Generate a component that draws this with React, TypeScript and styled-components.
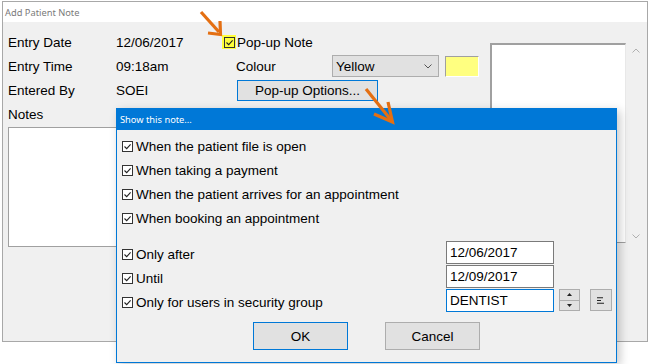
import React from 'react';
import styled, { createGlobalStyle } from 'styled-components';

const Global = createGlobalStyle`
  html, body { margin: 0; padding: 0; background: #fff; }
  body { font-family: "Liberation Sans", Arial, sans-serif; font-size: 13.5px; color: #000; }
  * { box-sizing: border-box; }
`;

const Stage = styled.div`
  position: relative;
  width: 651px;
  height: 364px;
  overflow: hidden;
  background: #fff;
`;

const Window = styled.div`
  margin: 1px 0 0 2px;
  width: 646px;
  height: 341px;
  border: 1px solid #a8a8a8;
  background: #f0f0f0;
  display: flex;
  flex-direction: column;
`;

const TitleBar = styled.div`
  height: 20px;
  flex: none;
  background: #fff;
  padding-left: 2px;
  display: flex;
  align-items: center;
  font-family: "Noto Sans", "Open Sans", sans-serif;
  font-size: 9.3px;
  color: #7a7a7a;
`;

const Body = styled.div`
  display: flex;
  padding: 8px 0 0 5px;
`;

const LeftCol = styled.div`
  width: 482px;
  display: flex;
  flex-direction: column;
`;

const FormRow = styled.div`
  display: flex;
  align-items: center;
  height: 24px;
`;

const Label = styled.div`
  width: 108px;
`;

const Value = styled.div`
  width: 106px;
`;

const Highlight = styled.div`
  width: 14px;
  height: 14px;
  background: #ffff3a;
  display: flex;
  align-items: center;
  justify-content: center;
  margin-right: 1px;
`;

const Box = styled.div<{ $bg?: string }>`
  width: 11px;
  height: 11px;
  border: 1px solid #333;
  background: ${(p) => p.$bg ?? '#fff'};
  display: flex;
  align-items: center;
  justify-content: center;
  flex: none;
`;

const ColourLabel = styled.div`
  margin-left: 14px;
  width: 96px;
`;

const Combo = styled.div`
  width: 107px;
  height: 22px;
  background: #e1e1e1;
  border: 1px solid #adadad;
  display: flex;
  align-items: center;
  justify-content: space-between;
  padding: 0 6px 0 3px;
`;

const Swatch = styled.div`
  margin-left: 6px;
  width: 34px;
  height: 21px;
  background: #ffff80;
  border-top: 1px solid #a0a0a0;
  border-left: 1px solid #a0a0a0;
  border-right: 1px solid #fff;
  border-bottom: 1px solid #fff;
`;

const WinButton = styled.div<{ $w: number; $h: number; $focus?: boolean; $indent?: number; $top?: boolean }>`
  width: ${(p) => p.$w}px;
  height: ${(p) => p.$h}px;
  margin-left: ${(p) => p.$indent ?? 0}px;
  align-self: ${(p) => (p.$top ? 'start' : 'auto')};
  background: #e1e1e1;
  border: 1px solid ${(p) => (p.$focus ? '#0078d7' : '#adadad')};
  display: flex;
  align-items: center;
  justify-content: center;
  flex: none;
`;

const NotesBox = styled.div`
  margin-top: 1px;
  width: 472px;
  height: 120px;
  background: #fff;
  border: 1px solid #a0a0a0;
`;

const ListArea = styled.div`
  margin-top: 13px;
  display: flex;
`;

const ListBox = styled.div`
  width: 136px;
  height: 200px;
  background: #fff;
  border-top: 2px solid #a0a0a0;
  border-left: 2px solid #a0a0a0;
  border-bottom: 1px solid #a0a0a0;
  border-right: 1px solid #e8e8e8;
`;

const ScrollBar = styled.div`
  width: 20px;
  height: 200px;
  display: flex;
  flex-direction: column;
  justify-content: space-between;
  align-items: center;
  padding: 5px 0 4px;
`;

/* popup dialog */
const Dialog = styled.div`
  position: absolute;
  left: 116px;
  top: 108px;
  width: 501px;
  height: 255px;
  border: 1px solid #0078d7;
  background: #f0f0f0;
  box-shadow: 3px 3px 9px rgba(0, 0, 0, 0.22);
  display: flex;
  flex-direction: column;
`;

const DialogTitle = styled.div`
  height: 21px;
  flex: none;
  background: #0078d7;
  color: #fff;
  padding-left: 3px;
  display: flex;
  align-items: center;
  font-family: "Noto Sans", "Open Sans", sans-serif;
  font-size: 9.3px;
`;

const DialogBody = styled.div`
  padding: 4px 0 0 5px;
  display: flex;
  flex-direction: column;
`;

const Group = styled.div<{ $gap?: number }>`
  margin-top: ${(p) => p.$gap ?? 0}px;
  display: flex;
  flex-direction: column;
`;

const CheckRow = styled.div`
  height: 24px;
  display: flex;
  align-items: center;
`;

const CheckText = styled.span`
  margin-left: 3px;
`;

const FieldRow = styled.div`
  height: 24px;
  display: grid;
  grid-template-columns: 319px 108px auto auto;
  column-gap: 5px;
  align-items: center;
`;

const FieldLabel = styled.div`
  display: flex;
  align-items: center;
  margin-top: 1px;
`;

const TextBox = styled.div<{ $focus?: boolean }>`
  width: 108px;
  height: 23px;
  background: #fff;
  border: 1px solid ${(p) => (p.$focus ? '#0078d7' : '#7a7a7a')};
  display: flex;
  align-items: center;
  padding-left: 3px;
  align-self: start;
`;

const Spinner = styled.div`
  width: 21px;
  height: 22px;
  background: #e1e1e1;
  border: 1px solid #adadad;
  display: flex;
  flex-direction: column;
  align-self: start;
`;

const SpinHalf = styled.div<{ $top?: boolean }>`
  flex: 1;
  display: flex;
  align-items: center;
  justify-content: center;
  border-bottom: ${(p) => (p.$top ? '1px solid #adadad' : 'none')};
`;

const ButtonRow = styled.div`
  margin-top: 9px;
  display: flex;
  justify-content: center;
  gap: 37px;
  padding-right: 5px;
`;

const Arrow = styled.svg<{ $x: number; $y: number }>`
  position: absolute;
  left: ${(p) => p.$x}px;
  top: ${(p) => p.$y}px;
  overflow: visible;
`;

const Tick = () => (
  <svg width="9" height="9" viewBox="0 0 9 9">
    <path d="M1.5 4.5 L3.7 6.7 L7.6 2.3" fill="none" stroke="#222" strokeWidth="1.1" />
  </svg>
);

const Check: React.FC<{ children: React.ReactNode }> = ({ children }) => (
  <CheckRow>
    <Box>
      <Tick />
    </Box>
    <CheckText>{children}</CheckText>
  </CheckRow>
);

const Chevron: React.FC<{ up?: boolean; color?: string }> = ({ up, color = '#555' }) => (
  <svg width="8" height="5" viewBox="0 0 8 5">
    <path
      d={up ? 'M0.5 4.5 L4 1 L7.5 4.5' : 'M0.5 0.5 L4 4 L7.5 0.5'}
      fill="none"
      stroke={color}
      strokeWidth="1"
    />
  </svg>
);

const Tri: React.FC<{ up?: boolean }> = ({ up }) => (
  <svg width="5" height="3" viewBox="0 0 5 3">
    <path d={up ? 'M0 3 L2.5 0 L5 3 Z' : 'M0 0 L2.5 3 L5 0 Z'} fill="#222" />
  </svg>
);

export default function App() {
  return (
    <Stage>
      <Global />
      <Window>
        <TitleBar>Add Patient Note</TitleBar>
        <Body>
          <LeftCol>
            <FormRow>
              <Label>Entry Date</Label>
              <Value>12/06/2017</Value>
              <Highlight>
                <Box $bg="transparent">
                  <Tick />
                </Box>
              </Highlight>
              <span>Pop-up Note</span>
            </FormRow>
            <FormRow>
              <Label>Entry Time</Label>
              <Value>09:18am</Value>
              <ColourLabel>Colour</ColourLabel>
              <Combo>
                <span>Yellow</span>
                <Chevron />
              </Combo>
              <Swatch />
            </FormRow>
            <FormRow>
              <Label>Entered By</Label>
              <Value>SOEI</Value>
              <WinButton $w={141} $h={21} $focus $indent={15}>
                Pop-up Options...
              </WinButton>
            </FormRow>
            <FormRow>
              <Label>Notes</Label>
            </FormRow>
            <NotesBox />
          </LeftCol>
          <ListArea>
            <ListBox />
            <ScrollBar>
              <Chevron up color="#b0b0b0" />
              <Chevron color="#b0b0b0" />
            </ScrollBar>
          </ListArea>
        </Body>
      </Window>

      <Dialog>
        <DialogTitle>Show this note...</DialogTitle>
        <DialogBody>
          <Group>
            <Check>When the patient file is open</Check>
            <Check>When taking a payment</Check>
            <Check>When the patient arrives for an appointment</Check>
            <Check>When booking an appointment</Check>
          </Group>
          <Group $gap={11}>
            <FieldRow>
              <FieldLabel>
                <Check>Only after</Check>
              </FieldLabel>
              <TextBox>12/06/2017</TextBox>
            </FieldRow>
            <FieldRow>
              <FieldLabel>
                <Check>Until</Check>
              </FieldLabel>
              <TextBox>12/09/2017</TextBox>
            </FieldRow>
            <FieldRow>
              <FieldLabel>
                <Check>Only for users in security group</Check>
              </FieldLabel>
              <TextBox $focus>DENTIST</TextBox>
              <Spinner>
                <SpinHalf $top>
                  <Tri up />
                </SpinHalf>
                <SpinHalf>
                  <Tri />
                </SpinHalf>
              </Spinner>
              <WinButton $w={22} $h={22} $top>
                <svg width="9" height="7" viewBox="0 0 9 7">
                  <path d="M1 0.75 H7 M1 3.5 H5 M1 6.25 H8" stroke="#222" strokeWidth="1.2" />
                </svg>
              </WinButton>
            </FieldRow>
          </Group>
          <ButtonRow>
            <WinButton $w={95} $h={28} $focus>
              OK
            </WinButton>
            <WinButton $w={95} $h={28}>
              Cancel
            </WinButton>
          </ButtonRow>
        </DialogBody>
      </Dialog>

      <Arrow $x={198} $y={9} width="26" height="30" viewBox="0 0 26 30">
        <g fill="none" stroke="#e46f12" strokeWidth="3.2" strokeLinecap="butt">
          <path d="M3 3 L21 23" />
          <path d="M22 12 L22.5 25.5 L10 24" />
        </g>
      </Arrow>
      <Arrow $x={362} $y={85} width="36" height="42" viewBox="0 0 36 42">
        <g fill="none" stroke="#e46f12" strokeWidth="3.2" strokeLinecap="butt">
          <path d="M4 4 L29 35" />
          <path d="M26 17 L30.5 37 L12 29" />
        </g>
      </Arrow>
    </Stage>
  );
}
